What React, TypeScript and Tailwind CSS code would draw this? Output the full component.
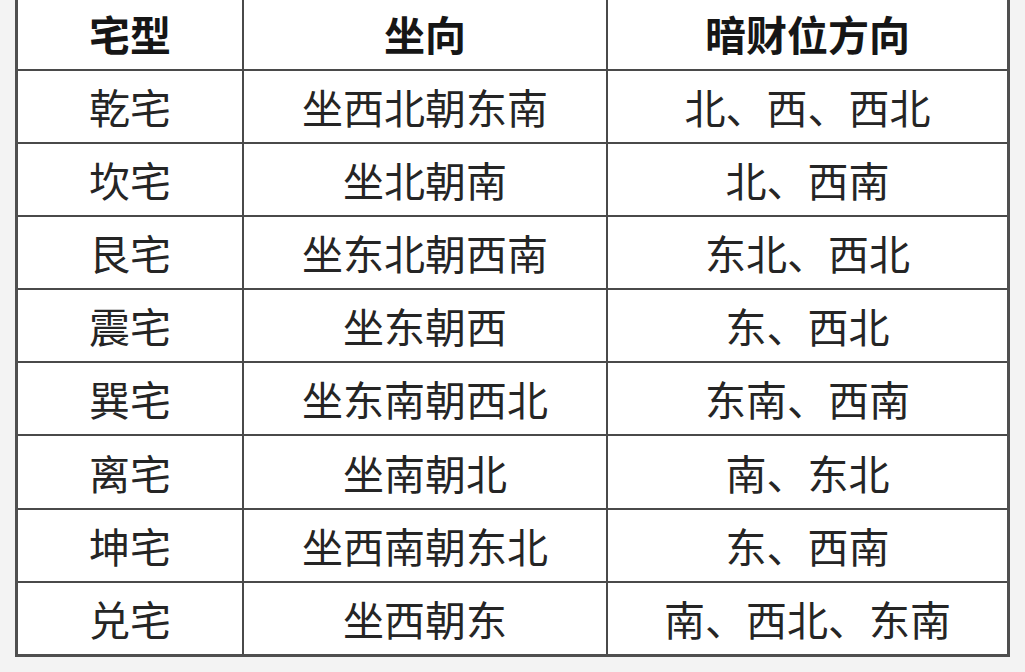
const rows = [
  ["乾宅", "坐西北朝东南", "北、西、西北"],
  ["坎宅", "坐北朝南", "北、西南"],
  ["艮宅", "坐东北朝西南", "东北、西北"],
  ["震宅", "坐东朝西", "东、西北"],
  ["巽宅", "坐东南朝西北", "东南、西南"],
  ["离宅", "坐南朝北", "南、东北"],
  ["坤宅", "坐西南朝东北", "东、西南"],
  ["兑宅", "坐西朝东", "南、西北、东南"],
];

const font = { fontFamily: '"Noto Sans CJK SC", "Noto Sans", sans-serif' };

export default function App() {
  return (
    <div className="h-[672px] w-full overflow-hidden bg-[#f3f3f3] pl-[15px]" style={font}>
      <div className="-mt-[3px] w-[995px] border-[3px] border-[#4f4f4f] bg-white">
        <div className="grid h-[71px] grid-cols-[226px_364px_399px] border-b-2 border-[#4a4a4a] text-[41px] font-bold leading-none text-[#161616]">
          <div className="flex items-center justify-center border-r-2 border-[#4a4a4a] pb-[2px]">宅型</div>
          <div className="flex items-center justify-center border-r-2 border-[#4a4a4a] pb-[2px]">坐向</div>
          <div className="flex items-center justify-center pb-[2px]">暗财位方向</div>
        </div>
        {rows.map((r, i) => (
          <div
            key={r[0]}
            className={
              "grid grid-cols-[226px_364px_399px] text-[41px] leading-none text-[#252525] " +
              (i < rows.length - 1 ? "h-[73.1px] border-b-2 border-[#4a4a4a]" : "h-[71.1px]")
            }
          >
            <div className="flex items-center justify-center border-r-2 border-[#4a4a4a]">{r[0]}</div>
            <div className="flex items-center justify-center border-r-2 border-[#4a4a4a]">{r[1]}</div>
            <div className="flex items-center justify-center">{r[2]}</div>
          </div>
        ))}
      </div>
    </div>
  );
}
